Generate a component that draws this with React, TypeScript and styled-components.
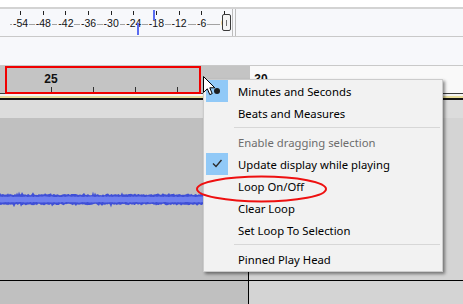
import React from 'react';
import styled, { createGlobalStyle } from 'styled-components';

const GlobalStyle = createGlobalStyle`
  html, body {
    margin: 0;
    padding: 0;
    background: #ffffff;
  }
  body {
    width: 463px;
    height: 304px;
    overflow: hidden;
    font-family: "Liberation Sans", Arial, sans-serif;
  }
`;

const Page = styled.div`
  position: relative;
  width: 463px;
  height: 304px;
  display: flex;
  flex-direction: column;
  overflow: hidden;
  background: #ffffff;
`;

const TopStrip = styled.div`
  flex: none;
  height: 7px;
  background: #ffffff;
  border-bottom: 2px solid #d3d3d3;
`;

const MeterBar = styled.div`
  position: relative;
  flex: none;
  display: flex;
  height: 27px;
  background: #f7f8fb;
  border-bottom: 1px solid #c9c9c9;
`;

const Scale = styled.div`
  position: relative;
  flex: none;
  width: 232px;
  display: flex;
  padding-left: 9.3px;
  box-sizing: border-box;

  &::before {
    content: '';
    position: absolute;
    left: 10px;
    width: 212px;
    top: 15px;
    height: 1px;
    background: #a3a3a3;
  }
`;

const ScaleCell = styled.div`
  flex: none;
  width: 22.65px;
  display: flex;
  flex-direction: column;
  align-items: center;
`;

const ScaleTick = styled.div`
  width: 1px;
  height: 4px;
  margin-top: 2px;
  background: #222;
`;

const ScaleLabel = styled.span`
  position: relative;
  margin-top: 3px;
  padding: 0 1px;
  font-size: 10.5px;
  line-height: 11px;
  color: #111;
  background: #f7f8fb;
  white-space: nowrap;
`;

const Rails = styled.div`
  flex: none;
  width: 2px;
  border-left: 1px solid #bdbdbd;
  border-right: 1px solid #bdbdbd;
`;

const Knob = styled.div`
  position: absolute;
  left: 222px;
  top: 5px;
  width: 9px;
  height: 17px;
  box-sizing: border-box;
  border: 1px solid #3a3a3a;
  border-radius: 2px;
  background: #f4f4f4;

  &::after {
    content: '';
    position: absolute;
    left: 3px;
    top: 5px;
    width: 1px;
    height: 6px;
    background: #707070;
  }
`;

const Peak = styled.div<{ $left: number; $top: number; $h: number }>`
  position: absolute;
  left: ${(p) => p.$left}px;
  top: ${(p) => p.$top}px;
  width: 2px;
  height: ${(p) => p.$h}px;
  background: #5a6cf0;
`;

const EmptyBar = styled.div`
  flex: none;
  height: 28px;
  background: #f7f8fb;
  border-bottom: 1px solid #c9c9c9;
`;

const Ruler = styled.div`
  flex: none;
  display: flex;
  height: 27px;
  padding-left: 30px;
  background: linear-gradient(to right, #c4c4c4 0, #c4c4c4 250px, #f9f9f9 250px);
  border-bottom: 1px solid #3c3c3c;
`;

const RulerCell = styled.div`
  flex: none;
  width: 42px;
  display: flex;
  flex-direction: column;
  align-items: center;
`;

const RulerLabel = styled.span`
  margin-top: 6px;
  font-size: 12px;
  line-height: 14px;
  font-weight: bold;
  color: #111;
`;

const RulerTick = styled.div`
  margin-top: auto;
  width: 1px;
  height: 5px;
  margin-bottom: 1px;
  background: #333;
`;

const RulerEdge = styled.div`
  flex: none;
  height: 2px;
  background: #e9de9c;
  border-top: 2px solid #f4f4f4;
  border-bottom: 2px solid #141414;
`;

const TrackTop = styled.div`
  flex: none;
  height: 18px;
  background: #dcdcdc;
`;

const Band = styled.div<{ $h?: number }>`
  display: flex;
  flex: ${(p) => (p.$h ? 'none' : '1')};
  height: ${(p) => (p.$h ? `${p.$h}px` : 'auto')};
  border-bottom: ${(p) => (p.$h ? '1px solid #000' : 'none')};
`;

const SelPart = styled.div`
  flex: none;
  width: 249px;
  box-sizing: border-box;
  background: #c0c0c0;
  border-right: 1px solid #000;

  svg {
    display: block;
  }
`;

const RestPart = styled.div`
  flex: 1;
  background: #d4d4d4;
`;

const Menu = styled.div`
  position: absolute;
  left: 203px;
  top: 79px;
  width: 240px;
  box-sizing: border-box;
  padding: 0 0 1px;
  background: #f2f2f2;
  border: 1px solid #cccccc;
  box-shadow: 2px 2px 3px rgba(0, 0, 0, 0.45);
  font-family: "Noto Sans", "Open Sans", sans-serif;
  font-size: 11.3px;
`;

const Item = styled.div<{ $disabled?: boolean }>`
  display: flex;
  align-items: center;
  height: 22px;
  padding-left: 2px;
  color: ${(p) => (p.$disabled ? '#6d6d6d' : '#000')};
  white-space: nowrap;
`;

const Mark = styled.div<{ $on?: boolean }>`
  flex: none;
  width: 22px;
  height: 22px;
  margin-right: 10px;
  background: ${(p) => (p.$on ? '#91c9f7' : 'transparent')};

  svg {
    display: block;
  }
`;

const Separator = styled.div`
  height: 7px;
  display: flex;
  align-items: center;
  padding-left: 30px;
  padding-right: 2px;

  &::after {
    content: '';
    flex: 1;
    height: 1px;
    background: #d7d7d7;
  }
`;

const RedBox = styled.div`
  position: absolute;
  left: 5px;
  top: 66px;
  width: 196px;
  height: 28px;
  box-sizing: border-box;
  border: 2px solid #f00000;
`;

const Overlay = styled.svg<{ $left: number; $top: number }>`
  position: absolute;
  left: ${(p) => p.$left}px;
  top: ${(p) => p.$top}px;
  overflow: visible;
`;

const meterLabels = ['-54', '-48', '-42', '-36', '-30', '-24', '-18', '-12', '-6', '0'];

function makeWave() {
  let seed = 7;
  const rnd = () => {
    seed = (seed * 16807) % 2147483647;
    return seed / 2147483647;
  };
  const w = 248;
  const c = 81.5;
  const outerTop: string[] = [];
  const outerBot: string[] = [];
  const innerTop: string[] = [];
  const innerBot: string[] = [];
  for (let x = 0; x <= w; x++) {
    const spikeT = rnd() < 0.12 ? rnd() * 2.5 : 0;
    const spikeB = rnd() < 0.12 ? rnd() * 2.5 : 0;
    const t = 4.2 + rnd() * 1.6 + spikeT;
    const b = 4.2 + rnd() * 1.6 + spikeB;
    outerTop.push(`${x},${(c - t).toFixed(1)}`);
    outerBot.unshift(`${x},${(c + b).toFixed(1)}`);
    const it = 2.4 + rnd() * 0.8;
    const ib = 2.4 + rnd() * 0.8;
    innerTop.push(`${x},${(c - it).toFixed(1)}`);
    innerBot.unshift(`${x},${(c + ib).toFixed(1)}`);
  }
  return {
    outer: `M${outerTop.join(' L')} L${outerBot.join(' L')} Z`,
    inner: `M${innerTop.join(' L')} L${innerBot.join(' L')} Z`,
  };
}

const wave = makeWave();

function Waveform() {
  return (
    <svg width="248" height="162" viewBox="0 0 248 162">
      <path d={wave.outer} fill="#3f4fd6" />
      <path d={wave.inner} fill="#6f7fee" />
    </svg>
  );
}

function Check() {
  return (
    <svg width="22" height="22" viewBox="0 0 22 22">
      <path d="M7 10.5 L10 13.5 L15.5 7" fill="none" stroke="#2b2b2b" strokeWidth="1.4" />
    </svg>
  );
}

function Bullet() {
  return (
    <svg width="22" height="22" viewBox="0 0 22 22">
      <circle cx="11" cy="11" r="3" fill="#1e1e1e" />
    </svg>
  );
}

const menuItems: (
  | { label: string; mark?: 'check' | 'bullet'; disabled?: boolean }
  | 'sep'
)[] = [
  { label: 'Minutes and Seconds', mark: 'bullet' },
  { label: 'Beats and Measures' },
  'sep',
  { label: 'Enable dragging selection', disabled: true },
  { label: 'Update display while playing', mark: 'check' },
  { label: 'Loop On/Off' },
  { label: 'Clear Loop' },
  { label: 'Set Loop To Selection' },
  'sep',
  { label: 'Pinned Play Head' },
];

export default function App() {
  return (
    <>
      <GlobalStyle />
      <Page>
        <TopStrip />
        <MeterBar>
          <Scale>
            {meterLabels.map((l) => (
              <ScaleCell key={l}>
                <ScaleTick />
                <ScaleLabel>{l}</ScaleLabel>
              </ScaleCell>
            ))}
          </Scale>
          <Rails />
          <Peak $left={153} $top={1} $h={10} />
          <Peak $left={137} $top={14} $h={12} />
          <Knob />
        </MeterBar>
        <EmptyBar />
        <Ruler>
          {[0, 1, 2, 3, 4, 5].map((i) => (
            <RulerCell key={i}>
              {i === 0 && <RulerLabel>25</RulerLabel>}
              {i === 5 && <RulerLabel>30</RulerLabel>}
              <RulerTick />
            </RulerCell>
          ))}
        </Ruler>
        <RulerEdge />
        <TrackTop />
        <Band $h={162}>
          <SelPart>
            <Waveform />
          </SelPart>
          <RestPart />
        </Band>
        <Band>
          <SelPart />
          <RestPart />
        </Band>

        <RedBox />

        <Menu>
          {menuItems.map((it, i) =>
            it === 'sep' ? (
              <Separator key={i} />
            ) : (
              <Item key={i} $disabled={it.disabled}>
                <Mark $on={!!it.mark}>
                  {it.mark === 'check' && <Check />}
                  {it.mark === 'bullet' && <Bullet />}
                </Mark>
                {it.label}
              </Item>
            )
          )}
        </Menu>

        <Overlay $left={196} $top={175} width="132" height="28" viewBox="0 0 132 28">
          <ellipse cx="65.5" cy="14" rx="64.5" ry="12.5" fill="none" stroke="#ee1010" strokeWidth="2" />
        </Overlay>

        <Overlay $left={203} $top={76} width="13" height="20" viewBox="0 0 13 20">
          <path
            d="M0.5 0.5 L0.5 16.5 L4.3 12.8 L6.8 18.6 L9.2 17.6 L6.8 11.8 L11.8 11.8 Z"
            fill="#ffffff"
            stroke="#000000"
            strokeWidth="1"
            strokeLinejoin="miter"
          />
        </Overlay>
      </Page>
    </>
  );
}
